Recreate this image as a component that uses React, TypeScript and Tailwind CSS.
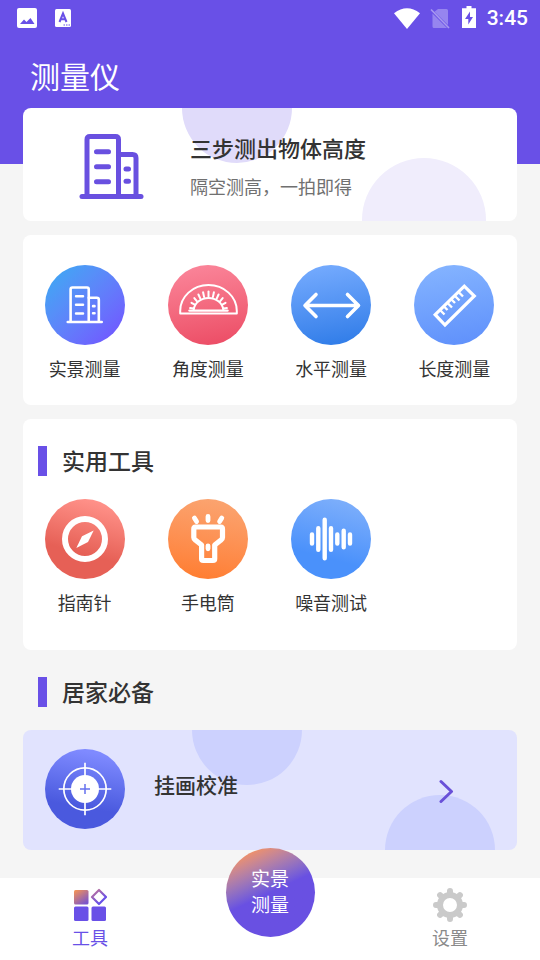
import React from "react";

const circleBase = "flex size-20 items-center justify-center rounded-full";

function BuildingIcon({ className, stroke }: { className: string; stroke: number }) {
  return (
    <svg viewBox="0 0 66 66" className={className} fill="none" stroke="currentColor" strokeWidth={stroke} strokeLinecap="round" strokeLinejoin="round" aria-hidden="true">
      <path d="M3 62.5H62" />
      <path d="M8 62V5.500q0-3 3-3H36.500q3 0 3 3V62" />
      <path d="M39.500 20.500H53.500q3.500 0 3.500 3.500V62" />
      <path d="M17.500 17.700H29.500M17.500 32.700H29.500M17.500 47.700H29.500M47 35H49.500M47 47.300H49.500" />
    </svg>
  );
}

function ProtractorIcon() {
  const angles = [6, 23, 40, 57, 73, 90, 107, 123, 140, 157, 174];
  return (
    <svg viewBox="0 0 80 80" className="size-20" fill="none" stroke="white" strokeWidth="2" strokeLinecap="round" aria-hidden="true">
      <path d="M12.200 48.600V46A28.300 26 0 0 1 68.800 46V48.600Z" strokeLinejoin="round" />
      <path d="M25.700 44.500A14.900 13 0 0 1 55.300 44.500" />
      <path d="M21.500 45.600H59.500" strokeWidth="2.400" />
      {angles.map((a) => {
        const c = Math.cos((a * Math.PI) / 180);
        const s = Math.sin((a * Math.PI) / 180);
        return <line key={a} x1={40.5 + 15 * c} y1={45 - 13.5 * s} x2={40.5 + 18.5 * c} y2={45 - 18.5 * s} />;
      })}
    </svg>
  );
}

function WidthIcon() {
  return (
    <svg viewBox="0 0 80 80" className="size-20" fill="none" stroke="white" strokeWidth="3.600" strokeLinecap="round" strokeLinejoin="round" aria-hidden="true">
      <path d="M14.500 40.500H67M25 29.500L14 40.500L25 51.500M56.500 29.500L67.500 40.500L56.500 51.500" />
    </svg>
  );
}

function RulerIcon() {
  return (
    <svg viewBox="0 0 80 80" className="size-20" fill="none" stroke="white" aria-hidden="true">
      <path d="M21.200 49.700L50.300 21.200L60.300 31L31 60Z" strokeWidth="3.200" />
      <path d="M26 45l4.500 4.500M30 41.500l3.500 3.500M33.500 38l4.500 4.500M37.500 34.500l3.500 3.500M41 31l4.500 4.500M45 27.500l4 4" strokeWidth="2.400" />
    </svg>
  );
}

function CompassIcon() {
  return (
    <svg viewBox="0 0 80 80" className="size-20" aria-hidden="true">
      <circle cx="40" cy="40" r="20" fill="none" stroke="white" strokeWidth="6" />
      <path d="M48.700 31.600L43 43L31.300 49L37 37.200Z" fill="white" />
    </svg>
  );
}

function TorchIcon() {
  return (
    <svg viewBox="0 0 80 80" className="size-20" fill="none" stroke="white" strokeWidth="5.200" strokeLinecap="round" strokeLinejoin="round" aria-hidden="true">
      <path d="M27.500 28H52.800Q54.500 28 54.500 30V38.500Q54.500 40 53 41L46.700 46V60Q46.700 61.500 45 61.500H35.300Q33.600 61.500 33.600 60V46L27.300 41Q25.800 40 25.800 38.500V30Q25.800 28 27.500 28Z" />
      <path d="M40 46.800V49.800M40 17.500V21.500M26.400 19L28.600 22.600M53.800 19L51.600 22.600" strokeWidth="4.800" />
    </svg>
  );
}

function SoundIcon() {
  return (
    <svg viewBox="0 0 80 80" className="size-20" stroke="white" strokeWidth="4.400" strokeLinecap="round" aria-hidden="true">
      <path d="M21 35.500V44.500M27.300 29.300V50.700M33.700 20.700V59.300M40 29.300V50.700M46.300 35.500V44.500M52.700 31.700V48.300M59 35.500V44.500" />
    </svg>
  );
}

function TargetIcon() {
  return (
    <svg viewBox="0 0 80 80" className="size-20" fill="none" stroke="white" strokeWidth="1.700" aria-hidden="true">
      <circle cx="40" cy="40" r="21.200" />
      <circle cx="40" cy="40" r="14" fill="white" stroke="none" />
      <path d="M40 13.700V66.300M13.700 40H66.300" />
      <path d="M40 35V45M35 40H45" stroke="#6672ee" strokeWidth="1.500" />
    </svg>
  );
}

function StatusBar() {
  return (
    <div className="flex h-9 items-center justify-between pr-3 pl-4">
      <div className="flex items-center gap-4">
        <svg viewBox="0 0 22 22" className="size-[22px]" aria-hidden="true">
          <rect x="1" y="1" width="20" height="20" rx="2" fill="white" />
          <path d="M4 17L8 12.500L10.500 15L14.500 11L18.500 17Z" fill="#6950e7" />
        </svg>
        <svg viewBox="0 0 18 20" className="h-5 w-[18px]" aria-hidden="true">
          <rect x="1" y="1" width="16" height="18" rx="1.500" fill="white" />
          <path d="M5.500 14L9 5.500L12.500 14M6.800 11.200H11.200" fill="none" stroke="#6950e7" strokeWidth="2" />
          <path d="M9.500 17H11M12 17H13.500M14.500 17H16" stroke="#6950e7" strokeWidth="1.200" />
        </svg>
      </div>
      <div className="flex items-center">
        <svg viewBox="0 0 26 21" className="h-[21px] w-[26px]" aria-hidden="true">
          <path d="M13 21L0 5.200Q13-4.800 26 5.200Z" fill="white" />
        </svg>
        <svg viewBox="0 0 20 21" className="ml-2.5 h-[21px] w-5" aria-hidden="true">
          <path d="M8 1H16.500Q18 1 18 2.500V17L4.500 3.800ZM2.500 5.500L17 20H4Q2.500 20 2.500 18.500Z" fill="#9685ef" />
          <path d="M1 1.500L19 20" stroke="#a89aef" strokeWidth="1.600" />
        </svg>
        <svg viewBox="0 0 14 22" className="mr-[11px] mb-0.5 ml-3 h-[22px] w-3.5" aria-hidden="true">
          <path d="M4.500 0H9.500V2.200H14V22H0V2.200H4.500Z" fill="white" />
          <path d="M8 5.500L3 13H6.300V18.500L11 11H8Z" fill="#6950e7" />
        </svg>
        <span className="font-['Roboto',sans-serif] text-[21px] leading-6 font-medium">3:45</span>
      </div>
    </div>
  );
}

function Tool({ label, tone, children }: { label: string; tone: string; children: React.ReactNode }) {
  return (
    <button type="button" className="flex flex-col items-center gap-2.5">
      <span className={`${circleBase} ${tone}`}>{children}</span>
      <span className="text-lg leading-[26px]">{label}</span>
    </button>
  );
}

function SectionTitle({ children }: { children: React.ReactNode }) {
  return (
    <div className="flex items-start gap-[15px] pl-[15px]">
      <span className="h-[30px] w-[9px] bg-[#6950e7]" />
      <h2 className="text-[23px] leading-7 font-medium">{children}</h2>
    </div>
  );
}

export default function App() {
  return (
    <div className="flex min-h-screen flex-col bg-[#f5f5f5] font-['Noto_Sans_CJK_SC',sans-serif] text-[#333333]">
      <header className="bg-[#6950e7] pb-17 text-white">
        <StatusBar />
        <h1 className="mt-[18px] pl-[30px] text-3xl leading-[42px] font-normal">测量仪</h1>
      </header>

      <main className="-mt-14 flex flex-col px-[23px]">
        <button type="button" className="relative flex h-[113px] items-center overflow-hidden rounded-lg bg-white pl-14 text-left">
          <span className="absolute -top-[55px] left-[159px] size-[110px] rounded-full bg-[#e0dbfa]" />
          <span className="absolute top-[50px] right-[31px] size-[124px] rounded-full bg-[#f0edfc]" />
          <BuildingIcon className="relative mt-1 size-[66px] text-[#6950e0]" stroke={5} />
          <span className="relative ml-[45px] flex flex-col gap-2.5">
            <span className="text-[22px] leading-8 font-medium">三步测出物体高度</span>
            <span className="text-lg leading-[26px] text-[#707070]">隔空测高，一拍即得</span>
          </span>
        </button>

        <section className="mt-3.5 grid grid-cols-4 rounded-lg bg-white pt-[30px] pr-px pb-6">
          <Tool label="实景测量" tone="bg-linear-135 from-[#3fa5f4] from-10% to-[#7058ff] to-90%">
            <BuildingIcon className="size-[38px] text-white" stroke={4.5} />
          </Tool>
          <Tool label="角度测量" tone="bg-linear-170 from-[#fb879c] to-[#eb4963]">
            <ProtractorIcon />
          </Tool>
          <Tool label="水平测量" tone="bg-linear-170 from-[#78adff] to-[#2b7ae7]">
            <WidthIcon />
          </Tool>
          <Tool label="长度测量" tone="bg-linear-170 from-[#86b5ff] to-[#5e8ffb]">
            <RulerIcon />
          </Tool>
        </section>

        <section className="mt-3.5 rounded-lg bg-white pt-[27px] pb-[35px]">
          <SectionTitle>实用工具</SectionTitle>
          <div className="mt-[23px] grid grid-cols-4 pr-px">
            <Tool label="指南针" tone="bg-linear-195 from-[#ff9189] from-10% to-[#e66056] to-65%">
              <CompassIcon />
            </Tool>
            <Tool label="手电筒" tone="bg-linear-190 from-[#faa673] to-[#ff7b2b]">
              <TorchIcon />
            </Tool>
            <Tool label="噪音测试" tone="bg-linear-195 from-[#83b2fb] to-[#4a91fb] to-70%">
              <SoundIcon />
            </Tool>
          </div>
        </section>

        <section className="mt-[27px]">
          <SectionTitle>居家必备</SectionTitle>
          <button type="button" className="relative mt-[23px] flex h-[120px] w-full items-center overflow-hidden rounded-lg bg-[#e1e3fe] pr-[63px] pb-[3px] pl-[22px]">
            <span className="absolute -top-[55px] left-[169px] size-[110px] rounded-full bg-[#ccd1fe]" />
            <span className="absolute top-[65px] right-[22px] size-[110px] rounded-full bg-[#ccd1fe]" />
            <span className={`relative ${circleBase} bg-linear-190 from-[#7f8aff] from-10% to-[#4a59de] to-70%`}>
              <TargetIcon />
            </span>
            <span className="relative mb-2.5 ml-[29px] text-[21px] leading-[30px] font-medium">挂画校准</span>
            <svg viewBox="0 0 16 24" className="relative mt-1 ml-auto h-6 w-4" fill="none" stroke="#6950d8" strokeWidth="3" strokeLinecap="round" strokeLinejoin="round" aria-hidden="true">
              <path d="M3 2.500L13.500 12.500L3 22.500" />
            </svg>
          </button>
        </section>
      </main>

      <nav className="relative mt-auto pt-7">
        <div className="grid h-[82px] grid-cols-3 bg-white">
          <button type="button" className="flex flex-col items-center pt-2.5 text-[#6950e7]">
            <svg viewBox="0 0 34 34" className="size-[34px]" aria-hidden="true">
              <defs>
                <linearGradient id="tile" x1="0" y1="0" x2="0.7" y2="1">
                  <stop offset="0" stopColor="#fa9650" />
                  <stop offset="1" stopColor="#7a55cc" />
                </linearGradient>
                <linearGradient id="diamond" x1="0" y1="0" x2="0.6" y2="0.8">
                  <stop offset="0" stopColor="#c77590" />
                  <stop offset="1" stopColor="#6950e7" />
                </linearGradient>
              </defs>
              <rect x="1" y="2" width="14.500" height="14.500" rx="1.500" fill="url(#tile)" />
              <rect x="1" y="18.500" width="14.500" height="14.500" rx="1.500" fill="#6950e7" />
              <rect x="18.500" y="18.500" width="14.500" height="14.500" rx="1.500" fill="#6950e7" />
              <path d="M26 2L33 9L26 16L19 9Z" fill="none" stroke="url(#diamond)" strokeWidth="2.200" strokeLinejoin="round" />
            </svg>
            <span className="mt-[3px] text-lg leading-6">工具</span>
          </button>
          <button type="button" className="-mt-[30px] flex size-[89px] flex-col items-center justify-center justify-self-center rounded-full bg-linear-155 from-[#f59260] from-10% to-[#6950e2] to-50% pb-1 text-[19px] leading-[26px] text-white">
            <span>实景</span>
            <span>测量</span>
          </button>
          <button type="button" className="flex flex-col items-center pt-2.5 text-[#8a8a8a]">
            <svg viewBox="0 0 34 34" className="size-[34px]" aria-hidden="true">
              <circle cx="17" cy="17" r="10" fill="none" stroke="#cacaca" strokeWidth="6" />
              <path d="M17 3V7M17 27V31M3 17H7M27 17H31M7.100 7.100L9.500 9.500M24.500 24.500L26.900 26.900M7.100 26.900L9.500 24.500M24.500 9.500L26.900 7.100" stroke="#cacaca" strokeWidth="6" strokeLinecap="round" />
            </svg>
            <span className="mt-[3px] text-lg leading-6">设置</span>
          </button>
        </div>
      </nav>
    </div>
  );
}
